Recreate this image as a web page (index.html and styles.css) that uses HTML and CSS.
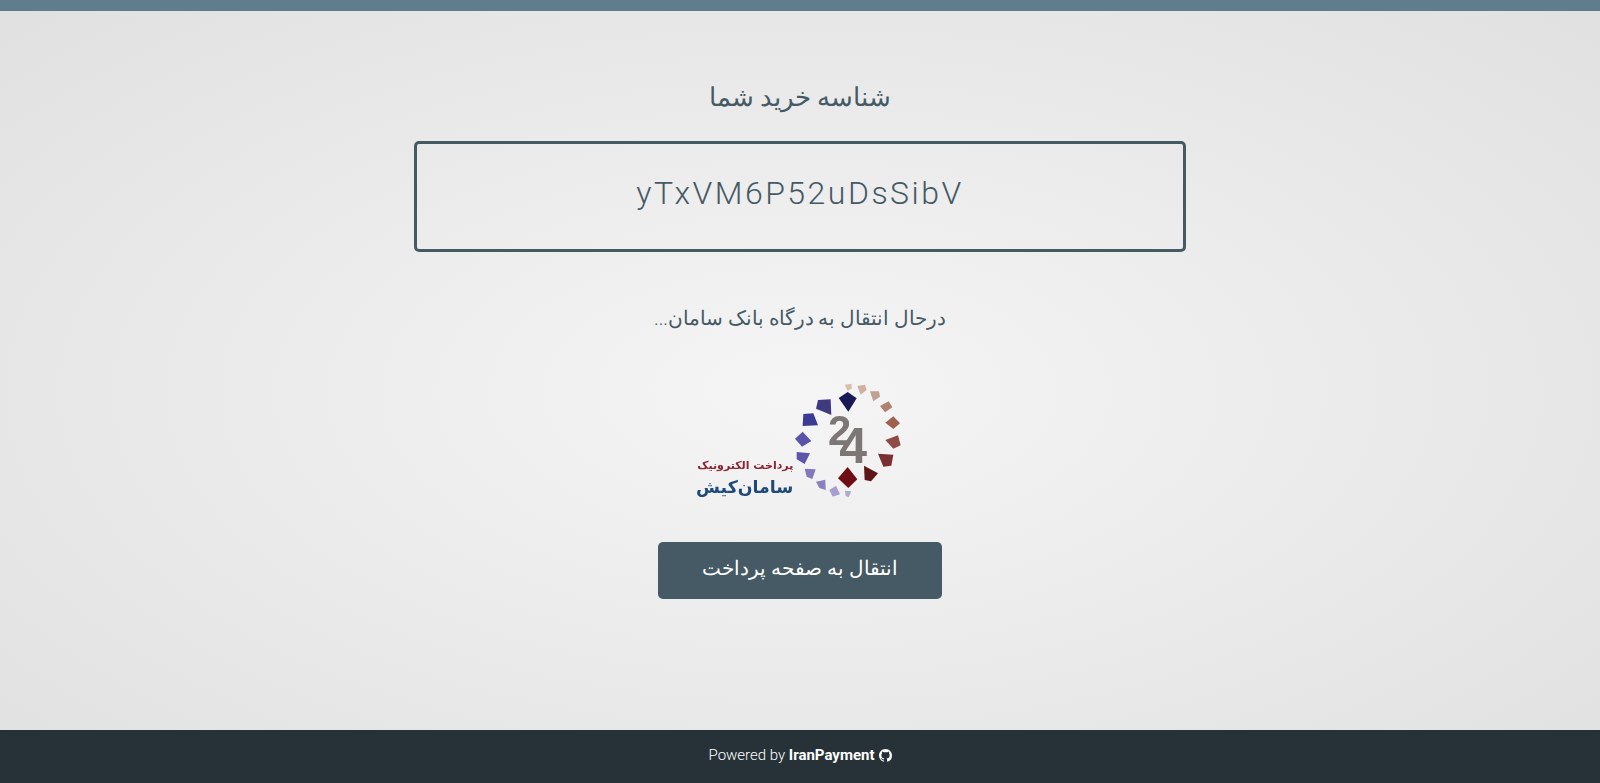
FILE: index.html
```html
<!DOCTYPE html>
<html lang="fa" dir="rtl">
<head>
    <meta charset="UTF-8">
    <meta name="viewport" content="width=device-width, initial-scale=1.0">
    <title>IranPayment</title>
    <link rel="stylesheet" href="styles.css">
</head>
<body>
    <div class="top-bar"></div>
    <main class="content">
        <h1 class="title">شناسه خرید شما</h1>
        <div class="code-box"><span class="code" dir="ltr">yTxVM6P52uDsSibV</span></div>
        <p class="status">درحال انتقال به درگاه بانک سامان...</p>

        <!-- لوگوی سامان کیش -->
        <svg class="logo" viewBox="0 0 720 420" width="240" height="140" aria-label="سامان کیش">
            <polygon fill="#1c1a55" points="476,84 503,66 530,85 505,125"/>
            <polygon fill="#3f3a80" points="414,90 452,88 454,135 408,116"/>
            <polygon fill="#3b3a94" points="370,132 400,130 414,166 368,168"/>
            <polygon fill="#5a52a8" points="345,206 368,185 394,213 366,230"/>
            <polygon fill="#5d55aa" points="350,246 390,250 374,282 350,268"/>
            <polygon fill="#8278bb" points="374,296 407,298 397,327 380,320"/>
            <polygon fill="#8a80c0" points="408,335 436,329 437,360 418,354"/>
            <polygon fill="#a69ed0" points="448,360 468,347 480,373 458,380"/>
            <polygon fill="#b0aad0" points="495,362 514,364 506,382 497,378"/>
            <polygon fill="#6e0e14" points="474,325 503,291 532,328 505,354"/>
            <polygon fill="#5e1616" points="552,287 594,310 573,334 554,330"/>
            <polygon fill="#7a3030" points="594,251 640,254 634,287 610,290"/>
            <polygon fill="#8f4a44" points="616,210 654,196 662,226 640,236"/>
            <polygon fill="#a06050" points="616,158 640,139 660,160 640,177"/>
            <polygon fill="#b08070" points="600,108 626,94 637,112 615,127"/>
            <polygon fill="#c0a090" points="570,64 597,64 600,80 580,94"/>
            <polygon fill="#d0b0a0" points="532,48 555,44 560,60 542,74"/>
            <polygon fill="#d8c0b0" points="494,44 514,41 516,55 503,63"/>
            <text class="logo-num" x="444" y="226" direction="ltr">2<tspan class="logo-four" x="478" y="280">4</tspan></text>
            <text class="logo-red" x="340" y="296">پرداخت الکترونیک</text>
            <text class="logo-blue" x="340" y="368">سامان‌کیش</text>
        </svg>

        <a class="button" href="#"><span class="button-label">انتقال به صفحه پرداخت</span></a>
    </main>
    <footer class="footer" dir="ltr">
        <span>Powered by <b>IranPayment</b></span>
        <svg class="gh" viewBox="0 0 16 16" width="13" height="13">
            <path fill="#fff" d="M8 0C3.58 0 0 3.58 0 8c0 3.54 2.29 6.53 5.47 7.59.4.07.55-.17.55-.38 0-.19-.01-.82-.01-1.49-2.01.37-2.53-.49-2.69-.94-.09-.23-.48-.94-.82-1.13-.28-.15-.68-.52-.01-.53.63-.01 1.08.58 1.23.82.72 1.21 1.87.87 2.33.66.07-.52.28-.87.51-1.07-1.78-.2-3.64-.89-3.64-3.95 0-.87.31-1.59.82-2.15-.08-.2-.36-1.02.08-2.12 0 0 .67-.21 2.2.82.64-.18 1.32-.27 2-.27s1.36.09 2 .27c1.53-1.04 2.2-.82 2.2-.82.44 1.1.16 1.92.08 2.12.51.56.82 1.27.82 2.15 0 3.07-1.87 3.75-3.65 3.95.29.25.54.73.54 1.48 0 1.07-.01 1.93-.01 2.2 0 .21.15.46.55.38A8.01 8.01 0 0 0 16 8c0-4.42-3.58-8-8-8z"/>
        </svg>
    </footer>
</body>
</html>
```

FILE: styles.css
```css
html, body {
    height: 100%;
}
body {
    margin: 0;
    display: flex;
    flex-direction: column;
    font-family: Roboto, "Noto Sans", "DejaVu Sans", sans-serif;
    font-weight: 300;
    color: #455a64;
    background: radial-gradient(ellipse at center, #f5f5f5 0%, #e0e0e0 100%);
}
.top-bar {
    height: 11px;
    background: #607d8b;
}
.content {
    flex: 1;
    display: flex;
    flex-direction: column;
    align-items: center;
}
.title {
    margin: 66px 0 24px;
    font-size: 26.2px;
    font-weight: 300;
    line-height: 40px;
}
.code-box {
    box-sizing: border-box;
    width: 772px;
    height: 111px;
    display: flex;
    align-items: center;
    justify-content: center;
    border: 3px solid #455a64;
    border-radius: 5px;
    padding-bottom: 8px;
}
.code {
    font-size: 32px;
    letter-spacing: 2.5px;
}
.status {
    margin: 49px 0 0;
    font-size: 19.7px;
    line-height: 36px;
}
.logo {
    display: block;
    margin-top: 33px;
    filter: blur(0.4px);
}
.logo-num {
    font-family: "Liberation Sans", sans-serif;
    font-weight: 700;
    font-size: 125px;
    fill: #7c7674;
}
.logo-four {
    font-size: 150px;
}
.logo-red {
    font-family: "DejaVu Sans", sans-serif;
    font-weight: 700;
    font-size: 33px;
    fill: #8e2430;
}
.logo-blue {
    font-family: "DejaVu Sans", sans-serif;
    font-weight: 700;
    font-size: 52px;
    fill: #1f4a78;
}
.button {
    box-sizing: border-box;
    width: 284px;
    height: 57px;
    margin-top: 32px;
    display: flex;
    align-items: center;
    justify-content: center;
    background: #455a64;
    color: #fff;
    font-size: 20.4px;
    text-decoration: none;
    border-radius: 5px;
}
.button-label {
    margin-bottom: 6px;
}
.footer {
    box-sizing: border-box;
    height: 53px;
    padding-bottom: 3px;
    display: flex;
    align-items: center;
    justify-content: center;
    gap: 4px;
    background: #263238;
    color: #fff;
    font-size: 15px;
}
.footer b {
    font-weight: 700;
}
```
